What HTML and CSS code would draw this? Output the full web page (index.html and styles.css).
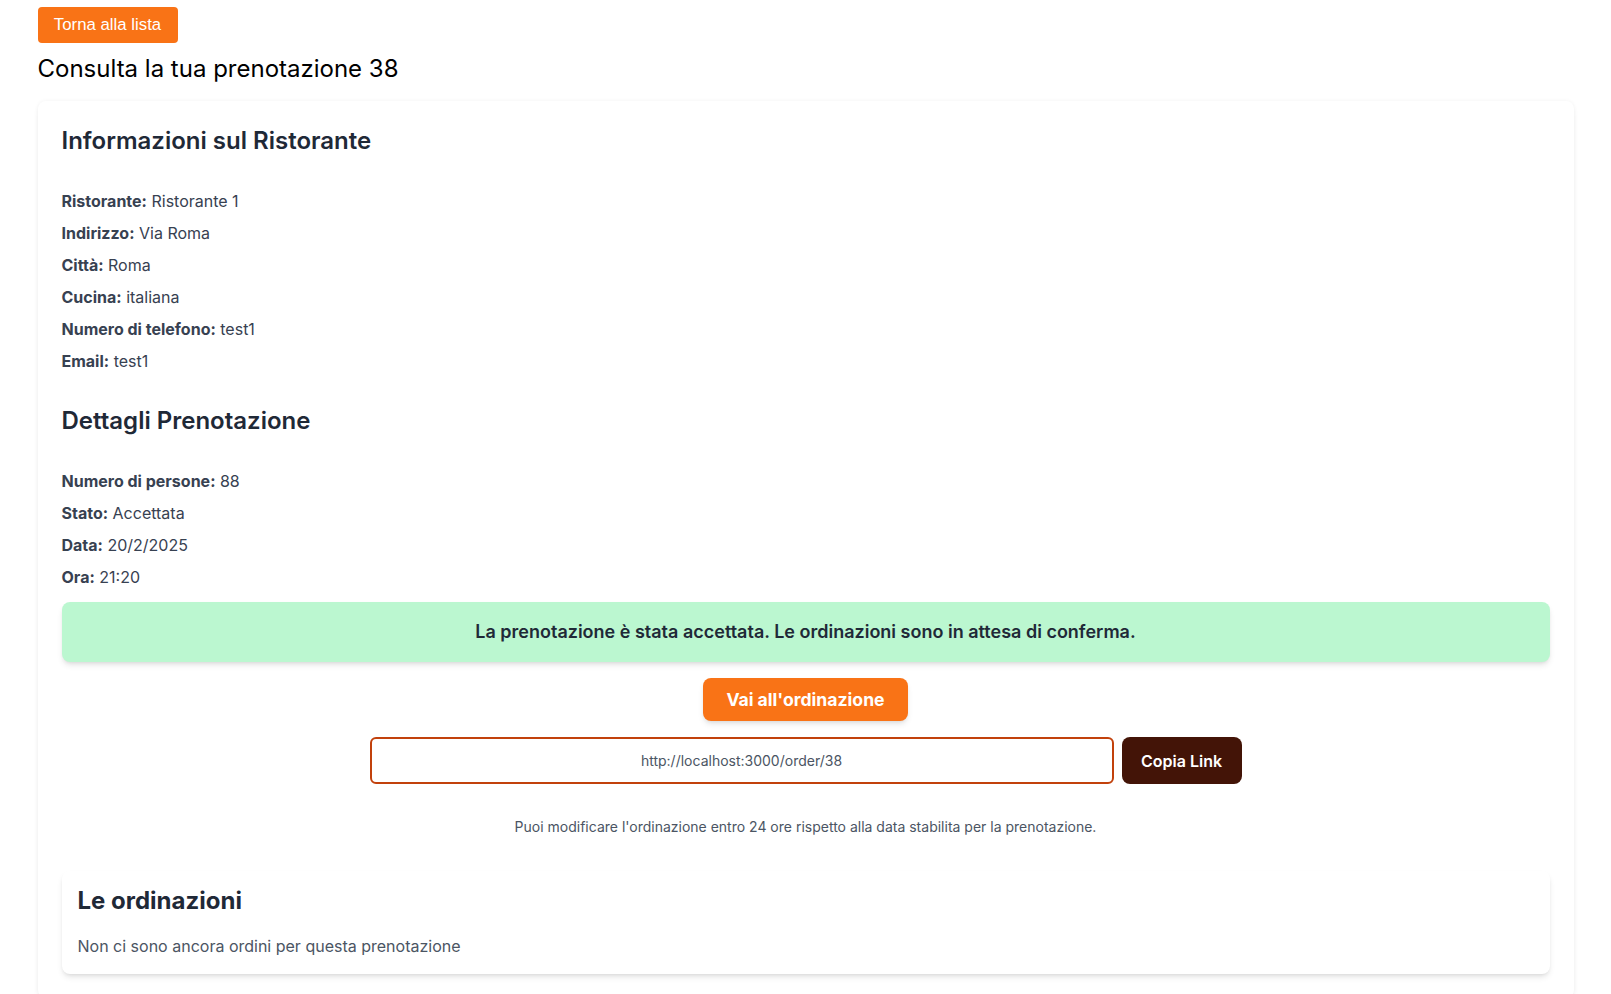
FILE: index.html
```html
<!DOCTYPE html>
<html lang="it">
<head>
<meta charset="utf-8">
<title>Prenotazione 38</title>
<link rel="stylesheet" href="styles.css">
</head>
<body>
<div class="container">
  <button class="back-btn">Torna alla lista</button>
  <h1 class="page-title">Consulta la tua prenotazione 38</h1>
  <div class="card">
    <h2 class="section-title">Informazioni sul Ristorante</h2>
    <div class="info-list">
      <p><strong>Ristorante:</strong> Ristorante 1</p>
      <p><strong>Indirizzo:</strong> Via Roma</p>
      <p><strong>Città:</strong> Roma</p>
      <p><strong>Cucina:</strong> italiana</p>
      <p><strong>Numero di telefono:</strong> test1</p>
      <p><strong>Email:</strong> test1</p>
    </div>
    <h2 class="section-title second">Dettagli Prenotazione</h2>
    <div class="info-list">
      <p><strong>Numero di persone:</strong> 88</p>
      <p><strong>Stato:</strong> Accettata</p>
      <p><strong>Data:</strong> 20/2/2025</p>
      <p><strong>Ora:</strong> 21:20</p>
    </div>
    <div class="status-box">La prenotazione è stata accettata. Le ordinazioni sono in attesa di conferma.</div>
    <div class="actions">
      <button class="order-btn">Vai all'ordinazione</button>
      <div class="link-row">
        <input class="link-input" type="text" value="http://localhost:3000/order/38" readonly>
        <button class="copy-btn">Copia Link</button>
      </div>
      <p class="note">Puoi modificare l'ordinazione entro 24 ore rispetto alla data stabilita per la prenotazione.</p>
    </div>
    <div class="orders-card">
      <h2 class="orders-title">Le ordinazioni</h2>
      <p class="orders-empty">Non ci sono ancora ordini per questa prenotazione</p>
    </div>
  </div>
</div>
</body>
</html>
```
FILE: styles.css
```css
* { box-sizing: border-box; }
html, body { margin: 0; padding: 0; background: #ffffff; }
body {
  font-family: Inter, "Noto Sans", sans-serif;
  color: #374151;
  font-size: 16px;
  line-height: 24px;
}
.container {
  max-width: 1536px;
  margin: 0 auto;
  padding-top: 7px;
}
.back-btn {
  display: block;
  font-family: "Liberation Sans", Arial, sans-serif;
  font-size: 16.8px;
  line-height: 24px;
  color: #ffffff;
  background: #f97316;
  border: none;
  border-radius: 4px;
  padding: 6px 0;
  width: 140px;
  margin: 0 0 9px 0;
}
.page-title {
  margin: 0 0 15px 0;
  font-size: 24px;
  line-height: 34px;
  font-weight: 400;
  color: #000000;
}
.card {
  background: #ffffff;
  border-radius: 8px;
  box-shadow: 0 4px 8px -2px rgba(0,0,0,0.06), 0 0 4px rgba(0,0,0,0.05);
  padding: 24px;
}
.section-title {
  margin: 0 0 32px 0;
  font-size: 24px;
  line-height: 32px;
  font-weight: 600;
  color: #1f2937;
}
.section-title.second { margin-top: 32px; }
.info-list {
  display: flex;
  flex-direction: column;
  gap: 8px;
}
.info-list p { margin: 0; color: #374151; }
.info-list strong { font-weight: 700; color: #374151; }
.status-box {
  margin-top: 13px;
  background: #bbf7d0;
  border-radius: 8px;
  box-shadow: 0 4px 6px -1px rgba(0,0,0,0.1), 0 2px 4px -2px rgba(0,0,0,0.1);
  padding: 16px;
  text-align: center;
  font-size: 18px;
  line-height: 28px;
  font-weight: 600;
  color: #1f2937;
}
.actions {
  display: flex;
  flex-direction: column;
  align-items: center;
  margin-top: 16px;
}
.order-btn {
  font-family: Inter, sans-serif;
  font-size: 17.6px;
  line-height: 27px;
  font-weight: 700;
  color: #ffffff;
  background: #f97316;
  border: none;
  border-radius: 8px;
  padding: 8px 0;
  width: 205px;
  box-shadow: 0 4px 6px -1px rgba(0,0,0,0.1), 0 2px 4px -2px rgba(0,0,0,0.1);
}
.link-row {
  display: flex;
  gap: 8px;
  margin-top: 16px;
}
.link-input {
  width: 744px;
  height: 47px;
  border: 2px solid #c2410c;
  border-radius: 6px;
  text-align: center;
  font-family: Inter, sans-serif;
  font-size: 14px;
  color: #4b5563;
  background: #ffffff;
  outline: none;
}
.copy-btn {
  width: 120px;
  height: 47px;
  font-family: Inter, sans-serif;
  font-size: 16px;
  font-weight: 600;
  color: #ffffff;
  background: #431407;
  border: none;
  border-radius: 8px;
}
.note {
  margin: 33px 0 0 0;
  font-size: 14px;
  line-height: 20px;
  color: #4b5563;
}
.orders-card {
  margin-top: 34px;
  padding: 16px;
  border-radius: 8px;
  background: #ffffff;
  box-shadow: 0 4px 6px -1px rgba(0,0,0,0.1), 0 2px 4px -2px rgba(0,0,0,0.1);
}
.orders-title {
  margin: 0 0 20px 0;
  font-size: 24px;
  line-height: 27px;
  font-weight: 700;
  color: #1f2937;
}
.orders-empty {
  margin: 0;
  color: #4b5563;
}
```
